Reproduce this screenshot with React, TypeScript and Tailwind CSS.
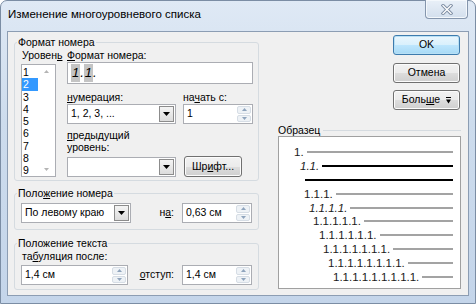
import type { ReactNode } from 'react';

const ui = "font-['Liberation_Sans',Arial,sans-serif]";

function U({ children }: { children: ReactNode }) {
  return <span className="underline decoration-1 underline-offset-[1px]">{children}</span>;
}

function Tri({ up = false, color = '#000', w = 7, h = 4 }: { up?: boolean; color?: string; w?: number; h?: number }) {
  return (
    <svg width={w} height={h} viewBox={`0 0 ${w} ${h}`}>
      <path d={up ? `M0 ${h}H${w}L${w / 2} 0Z` : `M0 0H${w}L${w / 2} ${h}Z`} fill={color} />
    </svg>
  );
}

function Combo({ text, className = '' }: { text?: string; className?: string }) {
  return (
    <div className={`flex h-[20px] items-stretch border border-[#abadb3] bg-white ${className}`}>
      <span className="flex flex-1 items-center pl-[3px]">{text}</span>
      <span className="m-px flex w-[15px] items-center justify-center border border-[#8c8c8c] bg-[linear-gradient(180deg,#f4f4f4,#dcdcdc)]">
        <Tri />
      </span>
    </div>
  );
}

function Spin({ value, className = '' }: { value: string; className?: string }) {
  return (
    <div className={`flex h-[20px] items-stretch border border-[#abadb3] bg-white ${className}`}>
      <span className="flex flex-1 items-center pl-[3px]">{value}</span>
      <span className="my-px mr-px flex w-[14px] flex-col gap-px">
        <span className="flex flex-1 items-center justify-center rounded-[2px] border border-[#d6dde5] bg-[#eef2f6]">
          <Tri up color="#8fa4bd" w={5} h={3} />
        </span>
        <span className="flex flex-1 items-center justify-center rounded-[2px] border border-[#d6dde5] bg-[#eef2f6]">
          <Tri color="#8fa4bd" w={5} h={3} />
        </span>
      </span>
    </div>
  );
}

function Btn({ children, def = false, className = '' }: { children: ReactNode; def?: boolean; className?: string }) {
  return (
    <div
      className={`flex h-[20px] items-center justify-center rounded-[3px] border ${
        def
          ? 'border-[#3d7bad] bg-[linear-gradient(180deg,#eaf6fd_0%,#d9f0fc_50%,#bee6fd_51%,#a7d9f5_100%)] shadow-[inset_0_0_0_1px_#b8e0f5]'
          : 'border-[#707070] bg-[linear-gradient(180deg,#f2f2f2_0%,#ebebeb_50%,#dddddd_51%,#cfcfcf_100%)] shadow-[inset_0_0_0_1px_#fcfcfc]'
      } ${className}`}
    >
      {children}
    </div>
  );
}

const previewRows = [
  { pad: 'pl-[15px]', text: '1.', italic: false, dark: false },
  { pad: 'pl-[21px]', text: '1.1.', italic: true, dark: true },
  { pad: 'pl-[26px]', text: '', italic: false, dark: true },
  { pad: 'pl-[25px]', text: '1.1.1.', italic: false, dark: false },
  { pad: 'pl-[30px]', text: '1.1.1.1.', italic: true, dark: false },
  { pad: 'pl-[34px]', text: '1.1.1.1.1.', italic: false, dark: false },
  { pad: 'pl-[40px]', text: '1.1.1.1.1.1.', italic: false, dark: false },
  { pad: 'pl-[44px]', text: '1.1.1.1.1.1.1.', italic: false, dark: false },
  { pad: 'pl-[49px]', text: '1.1.1.1.1.1.1.1.', italic: false, dark: false },
  { pad: 'pl-[54px]', text: '1.1.1.1.1.1.1.1.1.', italic: false, dark: false },
];

const levels = ['1', '2', '3', '4', '5', '6', '7', '8', '9'];

export default function App() {
  return (
    <div className={`${ui} flex h-[304px] w-[476px] flex-col rounded-t-[7px] border border-[#7b8da4] bg-[linear-gradient(180deg,#dfe9f5_0%,#cddced_40%,#c4d5ea_100%)] px-[6px] pb-[7px] text-[10.5px] text-black`}>
      {/* title bar */}
      <div className="flex h-[30px] items-start justify-between">
        <span className="mt-[6px] pl-px text-[11.5px] leading-[15px]">Изменение многоуровневого списка</span>
        <div className="-mt-px mr-px flex h-[19px] w-[43px] items-center justify-center rounded-b-[4px] border border-t-0 border-[#8596ad] bg-[linear-gradient(180deg,#e9f0f8,#d3dfed)] shadow-[inset_0_0_0_1px_#f4f8fc]">
          <svg width="12" height="11" viewBox="0 0 12 11">
            <path d="M2 1.5L10 9.5M10 1.5L2 9.5" stroke="#7f8fa5" strokeWidth="3.2" strokeLinecap="square" />
            <path d="M2 1.5L10 9.5M10 1.5L2 9.5" stroke="#ffffff" strokeWidth="1.3" strokeLinecap="square" />
          </svg>
        </div>
      </div>

      {/* client */}
      <div className="flex flex-1 border border-[#8c9db3] bg-[#f0f0f0] pl-[6px]">
        {/* left column */}
        <div className="flex w-[245px] flex-col pt-[4px]">
          <fieldset className="h-[145px] rounded-[3px] border border-[#d5dbe0] pl-[6px]">
            <legend className="-ml-[4px] px-px leading-[13px]">Формат номера</legend>
            <div className="flex">
              <div className="flex w-[46px] flex-col">
                <span className="pl-px leading-[13px]">
                  Уровен<U>ь</U>
                </span>
                <div className="mt-[2px] flex h-[113px] w-[35px] border border-[#abadb3] bg-white">
                  <div className="flex w-[16px] flex-col pt-px">
                    {levels.map((l) => (
                      <span
                        key={l}
                        className={`h-[12.3px] pl-px leading-[12.3px] ${l === '2' ? 'bg-[#3399ff] text-white' : ''}`}
                      >
                        {l}
                      </span>
                    ))}
                  </div>
                  <div className="flex flex-1 flex-col items-center justify-between py-[5px]">
                    <Tri up color="#b4b4b4" w={5} h={3} />
                    <Tri color="#b4b4b4" w={5} h={3} />
                  </div>
                </div>
              </div>

              <div className="flex w-[186px] flex-col">
                <span className="leading-[13px]">
                  <U>Ф</U>ормат номера:
                </span>
                <div className="flex h-[22px] items-center border border-[#abadb3] bg-white pl-[3px] text-[13px] italic">
                  <span className="bg-[#c4c4c4] px-px leading-[18px]">1</span>
                  <span className="leading-[18px]">.</span>
                  <span className="bg-[#c4c4c4] px-px leading-[18px]">1</span>
                  <span className="leading-[18px]">.</span>
                </div>

                <div className="mt-[6px] flex">
                  <div className="flex w-[109px] flex-col">
                    <span className="leading-[14px]">
                      <U>н</U>умерация:
                    </span>
                    <Combo text="1, 2, 3, ..." />
                  </div>
                  <div className="ml-[7px] flex w-[70px] flex-col">
                    <span className="leading-[14px]">
                      на<U>ч</U>ать с:
                    </span>
                    <Spin value="1" />
                  </div>
                </div>

                <span className="mt-[5px] leading-[12px]">
                  <U>п</U>редыдущий
                  <br />
                  уровень:
                </span>
                <div className="mt-[3px] flex items-end">
                  <Combo className="w-[109px]" />
                  <Btn className="ml-[8px] h-[21px] w-[58px]">
                    <span>
                      Шр<U>и</U>фт...
                    </span>
                  </Btn>
                </div>
              </div>
            </div>
          </fieldset>

          <fieldset className="mt-[6px] h-[43px] rounded-[3px] border border-[#d5dbe0] px-[6px] pt-[3px]">
            <legend className="-ml-[4px] px-px leading-[13px]">
              Поло<U>ж</U>ение номера
            </legend>
            <div className="flex items-center">
              <Combo text="По левому краю" className="w-[110px]" />
              <span className="ml-auto mr-[8px]">
                н<U>а</U>:
              </span>
              <Spin value="0,63 см" className="w-[70px]" />
            </div>
          </fieldset>

          <fieldset className="mt-[7px] h-[53px] rounded-[3px] border border-[#d5dbe0] px-[6px]">
            <legend className="-ml-[4px] px-px leading-[13px]">Положение текста</legend>
            <span className="block pl-px leading-[13px]">
              та<U>б</U>уляция после:
            </span>
            <div className="mt-[2px] flex items-center">
              <Spin value="1,4 см" className="w-[107px]" />
              <span className="ml-auto mr-[8px]">
                <U>о</U>тступ:
              </span>
              <Spin value="1,4 см" className="w-[70px]" />
            </div>
          </fieldset>
        </div>

        {/* right column */}
        <div className="ml-[19px] flex w-[183px] flex-col pt-[3px]">
          <Btn def className="mr-px w-[67px] self-end">
            OK
          </Btn>
          <Btn className="mr-px mt-[8px] w-[67px] self-end">Отмена</Btn>
          <Btn className="mr-px mt-[7px] w-[67px] self-end">
            <span>
              Боль<U>ш</U>е
            </span>
            <svg className="ml-[6px]" width="5" height="7" viewBox="0 0 5 7">
              <path d="M0 0.5H5" stroke="#000" strokeWidth="1" />
              <path d="M0 2.5H5L2.5 6.5Z" fill="#000" />
            </svg>
          </Btn>

          <div className="mt-[14px] flex items-center leading-[12px]">
            <span>Образец</span>
            <span className="ml-[3px] h-px flex-1 bg-[#d5dbe0]" />
          </div>
          <div className="flex h-[153px] flex-col border border-[#a0a0a0] bg-white pr-[7px] pt-[8px] text-[11.5px] text-[#1a1a1a]">
            {previewRows.map((r, i) => (
              <div key={i} className={`flex h-[13.9px] items-center ${r.pad}`}>
                {r.text && <span className={`mr-[3px] leading-[12px] ${r.italic ? 'italic' : ''}`}>{r.text}</span>}
                <span className={`h-[2px] flex-1 ${r.dark ? 'bg-black' : 'bg-[#a3a3a3]'}`} />
              </div>
            ))}
          </div>
        </div>
      </div>
    </div>
  );
}
